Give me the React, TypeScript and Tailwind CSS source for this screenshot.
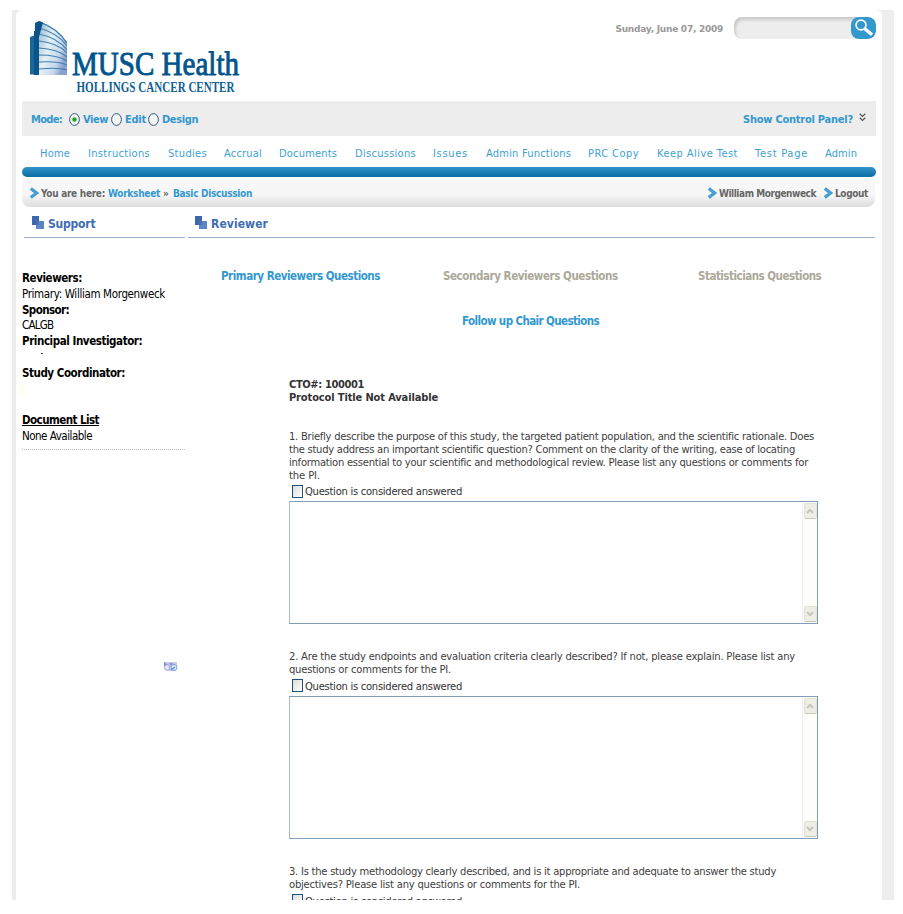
import type { ReactNode } from "react";

const CONDENSED = "font-['DejaVu_Sans_Condensed','DejaVu_Sans',sans-serif]";
const WIDE = "font-['DejaVu_Sans',sans-serif]";

const navItems = [
  { label: "Home", className: "w-12 tracking-[0.19px]" },
  { label: "Instructions", className: "w-20 tracking-[0.32px]" },
  { label: "Studies", className: "w-14 tracking-[0.33px]" },
  { label: "Accrual", className: "w-[55px] tracking-[0.2px]" },
  { label: "Documents", className: "w-[76px] tracking-[0.2px]" },
  { label: "Discussions", className: "w-[78px] tracking-[0.29px]" },
  { label: "Issues", className: "w-[53px] tracking-[0.7px]" },
  { label: "Admin Functions", className: "w-[102px] tracking-[0.21px]" },
  { label: "PRC Copy", className: "w-[69px] tracking-[0.44px]" },
  { label: "Keep Alive Test", className: "w-[98px] tracking-[0.45px]" },
  { label: "Test Page", className: "w-[70px] tracking-[0.74px]" },
  { label: "Admin", className: "tracking-[0.1px]" },
];

function Logo() {
  return (
    <svg className="ml-2 mt-[10px] block h-[80px] w-[220px]" viewBox="0 0 220 80">
      <defs>
        <linearGradient id="face" x1="0" y1="0" x2="1" y2="0.6">
          <stop offset="0" stopColor="#8fb4cf" />
          <stop offset="0.45" stopColor="#e3f0f5" />
          <stop offset="0.8" stopColor="#c5d8ec" />
          <stop offset="1" stopColor="#8b9fd0" />
        </linearGradient>
        <clipPath id="tower">
          <path d="M9 1 Q28 8 37 22 V55 H9Z" />
        </clipPath>
      </defs>
      <path d="M9 1 Q28 8 37 22 V55 H9Z" fill="url(#face)" />
      <g clipPath="url(#tower)" fill="none" stroke="#3f7dac" strokeWidth="1.1">
        <path d="M9 1.5 Q28 8 37 23" strokeWidth="1.8" />
        <path d="M9 8 Q28 13 37 26" />
        <path d="M9 14 Q28 18 37 30" />
        <path d="M9 21 Q28 23 37 33" />
        <path d="M9 28 Q28 29 37 37" />
        <path d="M9 35 Q28 35 37 41" />
        <path d="M9 42 Q28 41 37 45" />
        <path d="M9 49 Q28 47 37 50" />
      </g>
      <path d="M0 17 L4 15.5 V54.5 H0Z" fill="#1a689b" />
      <path d="M4 55 V11 H5 V3 L9 1 L13 2.5 L9 17 V55Z" fill="#0a5489" />
      <text
        x="42" y="55" textLength="167" lengthAdjust="spacingAndGlyphs"
        fontSize="34" fill="#00558c" stroke="#00558c" strokeWidth="0.9"
        fontFamily="'Liberation Serif', serif"
      >
        MUSC Health
      </text>
      <text
        x="46.5" y="71.5" textLength="158" lengthAdjust="spacingAndGlyphs"
        fontSize="14" fontWeight="700" fill="#0f5f93"
        fontFamily="'Liberation Serif', serif"
      >
        HOLLINGS CANCER CENTER
      </text>
    </svg>
  );
}

function Radio({ checked = false }: { checked?: boolean }) {
  return (
    <svg className="mb-[3px] h-[13px] w-[11px] shrink-0" viewBox="0 0 11 13">
      <ellipse cx="5.5" cy="6.5" rx="4.9" ry="5.9" fill="#f4f4f2" stroke="#2b5680" />
      {checked && <circle cx="5.5" cy="6.5" r="2.2" fill="#24a524" />}
    </svg>
  );
}

function Chevron() {
  return (
    <svg className="h-3 w-[9px] shrink-0" viewBox="0 0 9 12">
      <path d="M0.8 1.5 L6.6 6 L0.8 10.5" fill="none" stroke="#459fd0" strokeWidth="3.2" />
    </svg>
  );
}

function SectionHeading({ children, className }: { children: ReactNode; className: string }) {
  return (
    <div className={`flex h-[31px] border-b border-[#9daed0] pt-2 text-xs leading-[18px] font-bold text-[#416eb3] ${className}`}>
      <svg className="mt-px mr-1 h-[13px] w-3 shrink-0" viewBox="0 0 12 13">
        <path d="M0 0H7V9H0Z" fill="#3c68ab" />
        <path d="M4 5H12V13H4Z" fill="#5d84c6" />
        <path d="M4 5H7V9H4Z" fill="#4771b5" />
      </svg>
      {children}
    </div>
  );
}

function ScrollButton({ down = false }: { down?: boolean }) {
  return (
    <div className="flex h-4 w-[13px] items-center justify-center rounded-xs border border-[#e2e1d6] border-b-[#c9c7b5] bg-[#efeee6]">
      <svg className={`h-[6px] w-[8px] ${down ? "rotate-180" : ""}`} viewBox="0 0 8 6">
        <path d="M1 5 L4 1.8 L7 5" fill="none" stroke="#c6c5bc" strokeWidth="1.9" />
      </svg>
    </div>
  );
}

function AnswerBox({ className }: { className: string }) {
  return (
    <div className={`flex w-[529px] justify-end border border-[#7f9db9] border-l-[#a9bccf] bg-white ${className}`}>
      <div className="flex w-[15px] flex-col items-center justify-between border-l border-[#f1f1ec] bg-[#fdfdfa] py-px">
        <ScrollButton />
        <ScrollButton down />
      </div>
    </div>
  );
}

function AnsweredCheck({ className }: { className: string }) {
  return (
    <div className={`flex items-center pl-[3px] text-[#333] ${className}`}>
      <span className="mr-[2px] mb-px h-[13px] w-[11px] shrink-0 border border-[#1c5180] bg-linear-to-br from-[#dcdcd7] to-white" />
      <span className="tracking-[-0.274px]">Question is considered answered</span>
    </div>
  );
}

export default function App() {
  return (
    <div className={`h-[914px] w-[903px] bg-white pt-[10px] pl-3 ${CONDENSED}`}>
      <div className="h-[890px] w-[882px] overflow-hidden bg-[#ededed] pr-3 pl-1">
        <div className="h-full rounded-t-md bg-white pr-[6px] pl-[6px]">
          <header className="flex h-[91px] justify-between">
            <Logo />
            <div className="flex items-start pt-[7px]">
              <span className={`mr-[11px] pt-[5px] text-[9px] leading-[14px] font-bold tracking-[-0.25px] text-[#999] ${WIDE}`}>
                Sunday, June 07, 2009
              </span>
              <div className="flex h-[22px] w-[142px] justify-end overflow-hidden rounded-lg bg-[#ededed] shadow-[inset_2px_3px_3px_#ccc]">
                <div className="flex h-[22px] w-[25px] items-center justify-center rounded-lg bg-[#3399cc]">
                  <svg className="h-5 w-5" viewBox="0 0 20 20" fill="none" stroke="white">
                    <circle cx="7" cy="7" r="4.9" strokeWidth="1.7" />
                    <path d="M10.5 10.5 L18 16.8" strokeWidth="3.3" />
                  </svg>
                </div>
              </div>
            </div>
          </header>

          <div className="flex h-[35px] items-center justify-between bg-[#ededed] pr-[10px] pl-[9px] text-[11px] font-bold text-[#3398cf]">
            <div className="flex items-center pt-1">
              <span className="w-[38px] tracking-[-0.68px]">Mode:</span>
              <Radio checked />
              <span className="ml-[3px] w-7 tracking-[-0.43px]">View</span>
              <Radio />
              <span className="ml-[3px] w-[23px] tracking-[-0.24px]">Edit</span>
              <Radio />
              <span className="ml-[3px] tracking-[-0.35px]">Design</span>
            </div>
            <div className="flex items-center pt-1">
              <span className="tracking-[-0.234px]">Show Control Panel?</span>
              <svg className="mb-[6px] ml-[6px] h-[9px] w-[7px]" viewBox="0 0 7 9" fill="none" stroke="#555">
                <path d="M0.7 0.8 L3.5 3.5 L6.3 0.8 M0.7 4.8 L3.5 7.5 L6.3 4.8" strokeWidth="1.2" />
              </svg>
            </div>
          </div>

          <nav className="flex h-[31px] items-center pt-[6px] pl-[18px] text-[11px] whitespace-nowrap text-[#3d9fd3]">
            {navItems.map((item) => (
              <a key={item.label} className={`block shrink-0 ${item.className}`}>
                {item.label}
              </a>
            ))}
          </nav>
          <div className="h-[10px] rounded-[5px] bg-linear-to-b from-[#2f95ca] to-[#0c6ca5]" />

          <div className="mt-[2px] mr-px flex h-7 items-center justify-between rounded-b-lg bg-linear-to-b from-[#f7f7f7] from-55% to-[#dcdcdc] pr-[7px] pl-2 text-[10px] font-bold whitespace-nowrap text-[#666]">
            <div className="flex items-center">
              <Chevron />
              <span className="ml-[2px] w-[67px] tracking-[-0.286px]">You are here:</span>
              <span className="w-[55px] tracking-[-0.273px] text-[#3398cf]">Worksheet</span>
              <span className="w-[10px]">»</span>
              <span className="tracking-[-0.304px] text-[#3398cf]">Basic Discussion</span>
            </div>
            <div className="flex items-center">
              <Chevron />
              <span className="ml-[2px] w-[105px] tracking-[-0.449px]">William Morgenweck</span>
              <Chevron />
              <span className="ml-[2px] tracking-[-0.375px]">Logout</span>
            </div>
          </div>

          <div className="flex">
            <aside className="mr-[3px] ml-px w-[162px]">
              <SectionHeading className="ml-px pl-2 tracking-[-0.2px]">Support</SectionHeading>
              <div className="-ml-px flex h-[212px] flex-col border-b border-dotted border-[#bbb] pt-[33px] text-[11.5px] leading-[15.75px] whitespace-nowrap text-black">
                <b className="tracking-[-0.43px]">Reviewers:</b>
                <span className="tracking-[-0.35px]">Primary: William Morgenweck</span>
                <b className="tracking-[-0.6px]">Sponsor:</b>
                <span className="tracking-[-0.8px]">CALGB</span>
                <b className="tracking-[-0.43px]">Principal Investigator:</b>
                <div className="h-[15.75px] pt-[3px] pl-[19px]">
                  <div className="h-px w-[2px] bg-[#444]" />
                </div>
                <b className="tracking-[-0.45px]">Study Coordinator:</b>
                <div className="h-[31.5px] pt-1">
                  <div className="h-[10px] w-px bg-[#ffffb0]" />
                </div>
                <b className="tracking-[-0.55px] underline">Document List</b>
                <span className="tracking-[-0.5px]">None Available</span>
              </div>
              <svg className="mt-[211px] ml-[140px] h-[11px] w-[15px]" viewBox="0 0 15 11">
                <path d="M1 1H14V6L12 10H5L1 6Z" fill="#c9c9ea" />
                <path d="M1 1L6 5L1 6Z" fill="#7f86c4" />
                <circle cx="4" cy="6.5" r="2.7" fill="#e8e8f8" stroke="#a3a6d4" />
                <circle cx="11" cy="6.5" r="3" fill="#dceafa" stroke="#7d9fdb" />
                <path d="M6 2L10 2L8 5Z" fill="#8d91cd" />
                <path d="M8 9L12 6" stroke="#4c8fe0" strokeWidth="1.4" />
              </svg>
            </aside>

            <main className="w-[687px]">
              <SectionHeading className="pl-[7px] tracking-[0.08px]">Reviewer</SectionHeading>
              <div className="flex h-[75px] pt-[30px] pl-[33px] text-[11.5px] leading-4 font-bold whitespace-nowrap">
                <span className="w-[222px] tracking-[-0.47px] text-[#3398cf]">Primary Reviewers Questions</span>
                <span className="w-[255px] tracking-[-0.43px] text-[#aca899]">Secondary Reviewers Questions</span>
                <span className="tracking-[-0.5px] text-[#aca899]">Statisticians Questions</span>
              </div>
              <div className="h-[65px] pl-[274px] text-[11.5px] leading-4 font-bold tracking-[-0.6px] text-[#3398cf]">
                Follow up Chair Questions
              </div>
              <div className={`pl-[101px] text-[10px] leading-[13px] whitespace-nowrap text-[#404040] ${WIDE}`}>
                <div className={`flex h-[52px] flex-col text-[11px] font-bold text-[#333] ${CONDENSED}`}>
                  <span className="tracking-[-0.37px]">CTO#: 100001</span>
                  <span className="tracking-[-0.132px]">Protocol Title Not Available</span>
                </div>

                <div className="flex flex-col">
                  <span className="tracking-[-0.261px]">1. Briefly describe the purpose of this study, the targeted patient population, and the scientific rationale. Does</span>
                  <span className="tracking-[-0.271px]">the study address an important scientific question? Comment on the clarity of the writing, ease of locating</span>
                  <span className="tracking-[-0.246px]">information essential to your scientific and methodological review. Please list any questions or comments for</span>
                  <span className="tracking-[-0.107px]">the PI.</span>
                </div>
                <AnsweredCheck className="h-[19px]" />
                <AnswerBox className="h-[123px]" />

                <div className="mt-[26px] flex flex-col">
                  <span className="tracking-[-0.213px]">2. Are the study endpoints and evaluation criteria clearly described? If not, please explain. Please list any</span>
                  <span className="tracking-[-0.23px]">questions or comments for the PI.</span>
                </div>
                <AnsweredCheck className="h-5" />
                <AnswerBox className="h-[143px]" />

                <div className="mt-[26px] flex flex-col">
                  <span className="tracking-[-0.252px]">3. Is the study methodology clearly described, and is it appropriate and adequate to answer the study</span>
                  <span className="tracking-[-0.213px]">objectives? Please list any questions or comments for the PI.</span>
                </div>
                <AnsweredCheck className="h-5" />
              </div>
            </main>
          </div>
        </div>
      </div>
    </div>
  );
}
